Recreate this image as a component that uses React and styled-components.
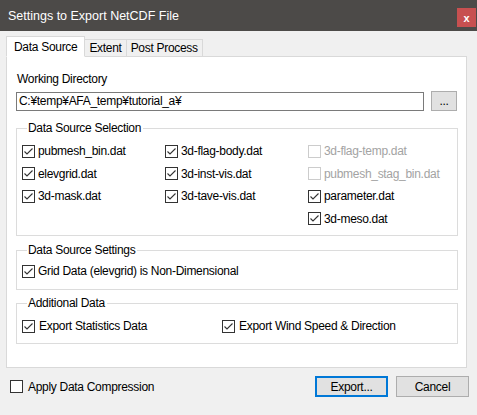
import React from 'react';
import styled, { createGlobalStyle } from 'styled-components';

const GlobalStyle = createGlobalStyle`
  html, body {
    margin: 0;
    padding: 0;
    background: #f0f0f0;
  }
  body {
    font-family: "Liberation Sans", "Noto Sans CJK JP", sans-serif;
    font-size: 12px;
    letter-spacing: -0.3px;
    color: #000;
  }
`

const Window = styled.div`
  width: 477px;
  height: 415px;
  display: flex;
  flex-direction: column;
  background: #f0f0f0;
  overflow: hidden;
`

const TitleBar = styled.div`
  height: 31px;
  background: #4c4a48;
  display: flex;
  align-items: center;
  justify-content: space-between;
  padding-left: 8px;
  padding-right: 1px;
  color: #fff;
  font-size: 12.5px;
  letter-spacing: 0;
  box-sizing: border-box;
`

const CloseButton = styled.div`
  width: 19px;
  height: 19px;
  margin-top: 4px;
  background: #c75050;
  color: #fff;
  font-weight: bold;
  font-size: 11px;
  display: flex;
  align-items: center;
  justify-content: center;
`

const Body = styled.div`
  padding: 6px 10px 0 6px;
  display: flex;
  flex-direction: column;
`

const TabRow = styled.div`
  display: flex;
  align-items: flex-end;
  height: 20px;
  margin-bottom: -1px;
  position: relative;
  z-index: 1;
`

const Tab = styled.div`
  height: ${p => (p.$active ? '21px' : '18px')};
  padding: 0 ${p => (p.$active ? '7px' : '4px')};
  box-sizing: border-box;
  border: 1px solid #d9d9d9;
  border-bottom: ${p => (p.$active ? '1px solid #fff' : '1px solid #d9d9d9')};
  border-left: ${p => (p.$first || p.$active ? '1px solid #d9d9d9' : 'none')};
  background: ${p => (p.$active ? '#fff' : '#f0f0f0')};
  display: flex;
  align-items: center;
  font-size: 12px;
`

const Panel = styled.div`
  background: #fff;
  border: 1px solid #d9d9d9;
  padding: 14px 8px 23px 9px;
  display: flex;
  flex-direction: column;
`

const FieldLabel = styled.div`
  line-height: 16px;
  padding-left: 1px;
`

const PathRow = styled.div`
  display: flex;
  align-items: center;
  gap: 7px;
  margin-top: 4px;
  margin-right: 1px;
`

const PathInput = styled.div`
  flex: 1;
  height: 19px;
  box-sizing: border-box;
  border: 1px solid #7a7a7a;
  padding-left: 2px;
  display: flex;
  align-items: center;
`

const Button = styled.div`
  width: ${p => p.$width || '73px'};
  height: ${p => p.$height || '21px'};
  box-sizing: border-box;
  background: #e1e1e1;
  border: ${p => (p.$default ? '2px solid #0078d7' : '1px solid #adadad')};
  display: flex;
  align-items: center;
  justify-content: center;
`

const Group = styled.fieldset`
  margin: ${p => p.$top || '7px'} 0 0 0;
  padding: ${p => p.$pad || '4px 4px 4px 5px'};
  border: 1px solid #dcdcdc;
  min-width: 0;
`

const Legend = styled.legend`
  padding: 0 2px 0 1px;
  margin-left: 5px;
  line-height: 14px;
`

const Grid = styled.div`
  display: grid;
  grid-template-columns: ${p => p.$cols || '143px 143px 1fr'};
  grid-auto-rows: ${p => p.$row || '22.5px'};
`

const Item = styled.div`
  display: flex;
  align-items: center;
  gap: ${p => p.$gap || '3px'};
  color: ${p => (p.$disabled ? '#a3a3a3' : '#000')};
  white-space: nowrap;
`

const Box = styled.span`
  width: 13px;
  height: 13px;
  box-sizing: border-box;
  border: 1px solid ${p => (p.$disabled ? '#cccccc' : '#333333')};
  background: #fff;
  display: inline-flex;
  align-items: center;
  justify-content: center;
  flex-shrink: 0;
`

const Footer = styled.div`
  display: flex;
  align-items: center;
  justify-content: space-between;
  padding: 8px 8px 0 10px;
`

const FooterButtons = styled.div`
  display: flex;
  gap: 8px;
`

function Check ({ checked, disabled, label, gap }) {
  return (
    <Item $disabled={disabled} $gap={gap}>
      <Box $disabled={disabled}>
        {checked && (
          <svg width="11" height="11" viewBox="0 0 11 11">
            <path d="M1.5 5.5 L4 8 L9.5 2.5" fill="none" stroke="#333" strokeWidth="1.1" />
          </svg>
        )}
      </Box>
      <span>{label}</span>
    </Item>
  )
}

const sources = [
  { label: 'pubmesh_bin.dat', checked: true },
  { label: '3d-flag-body.dat', checked: true },
  { label: '3d-flag-temp.dat', disabled: true },
  { label: 'elevgrid.dat', checked: true },
  { label: '3d-inst-vis.dat', checked: true },
  { label: 'pubmesh_stag_bin.dat', disabled: true },
  { label: '3d-mask.dat', checked: true },
  { label: '3d-tave-vis.dat', checked: true },
  { label: 'parameter.dat', checked: true },
  null,
  null,
  { label: '3d-meso.dat', checked: true },
]

export default function App () {
  return (
    <Window>
      <GlobalStyle />
      <TitleBar>
        <span>Settings to Export NetCDF File</span>
        <CloseButton>x</CloseButton>
      </TitleBar>
      <Body>
        <TabRow>
          <Tab $active $first>Data Source</Tab>
          <Tab>Extent</Tab>
          <Tab>Post Process</Tab>
        </TabRow>
        <Panel>
          <FieldLabel>Working Directory</FieldLabel>
          <PathRow>
            <PathInput>C:¥temp¥AFA_temp¥tutorial_a¥</PathInput>
            <Button $width="26px" $height="20px">...</Button>
          </PathRow>

          <Group $top="10px" $pad="5px 4px 5px 5px">
            <Legend>Data Source Selection</Legend>
            <Grid>
              {sources.map((s, i) => (
                s ? <Check key={i} {...s} /> : <span key={i} />
              ))}
            </Grid>
          </Group>

          <Group $pad="3px 4px 7px 5px">
            <Legend>Data Source Settings</Legend>
            <Grid $cols="1fr" $row="22px">
              <Check checked label="Grid Data (elevgrid) is Non-Dimensional" />
            </Grid>
          </Group>

          <Group $top="6px" $pad="5px 4px 6px 5px">
            <Legend>Additional Data</Legend>
            <Grid $cols="200px 1fr" $row="22px">
              <Check checked gap="4px" label="Export Statistics Data" />
              <Check checked gap="4px" label="Export Wind Speed & Direction" />
            </Grid>
          </Group>
        </Panel>
      </Body>
      <Footer>
        <Check gap="5px" label="Apply Data Compression" />
        <FooterButtons>
          <Button $default>Export...</Button>
          <Button>Cancel</Button>
        </FooterButtons>
      </Footer>
    </Window>
  );
}
